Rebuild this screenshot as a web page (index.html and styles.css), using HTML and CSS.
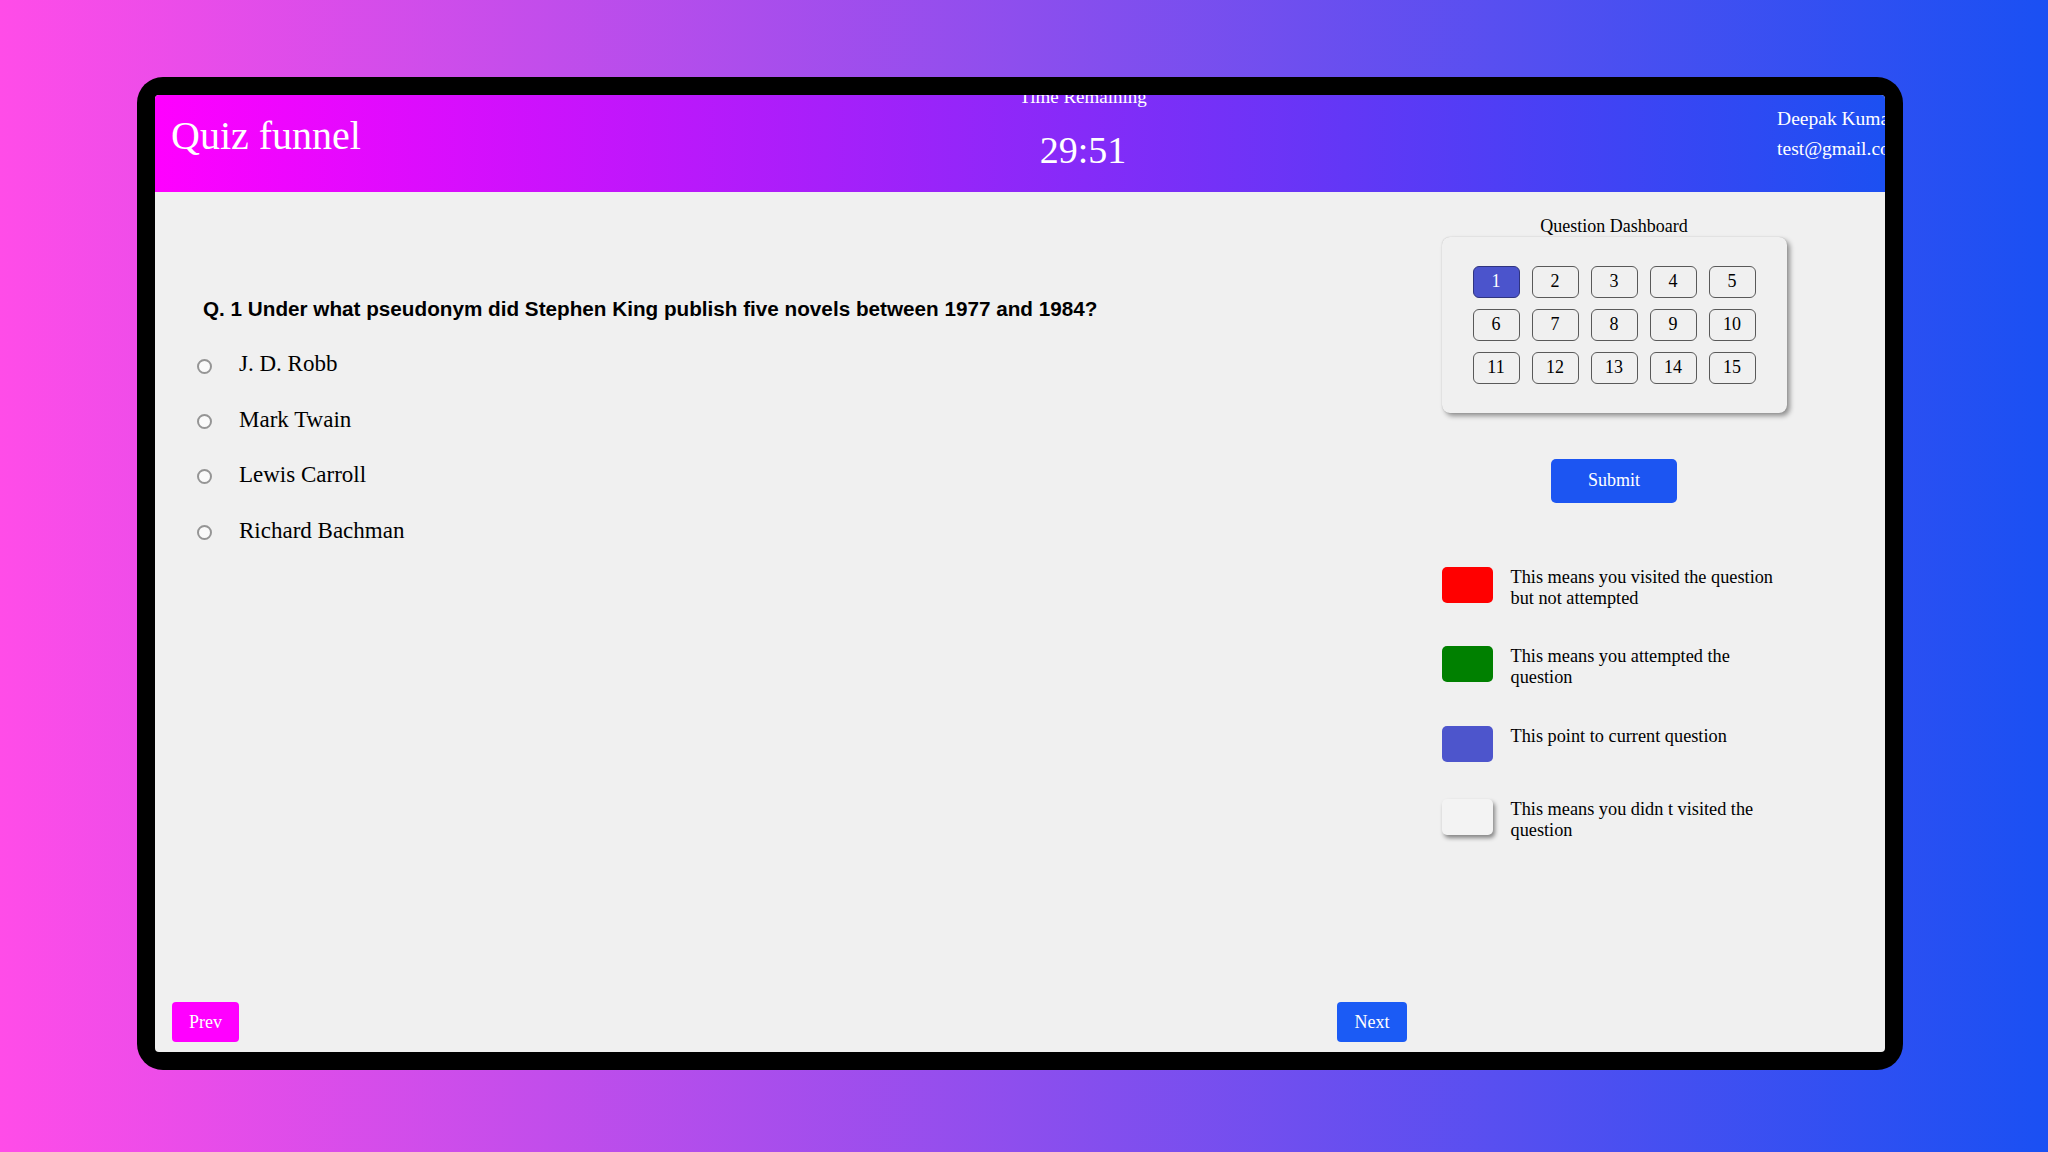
FILE: index.html
```html
<!DOCTYPE html>
<html lang="en">
<head>
  <meta charset="UTF-8">
  <meta name="viewport" content="width=device-width, initial-scale=1.0">
  <title>Quiz funnel</title>
  <link rel="stylesheet" href="styles.css">
</head>
<body>
  <div class="device">
    <div class="app">
      <header class="topbar">
        <h1 class="brand">Quiz funnel</h1>
        <div class="timer">
          <div class="timer-label">Time Remaining</div>
          <div class="timer-value">29:51</div>
        </div>
        <div class="user">
          <div>Deepak Kumar</div>
          <div>test@gmail.com</div>
        </div>
      </header>

      <main class="quiz">
        <section class="question-panel">
          <div class="question">
            <h2 class="question-text">Q. 1 Under what pseudonym did Stephen King publish five novels between 1977 and 1984?</h2>
            <div class="options">
              <label class="option"><input type="radio" name="answer" class="radio"> <span>J. D. Robb</span></label>
              <label class="option"><input type="radio" name="answer" class="radio"> <span>Mark Twain</span></label>
              <label class="option"><input type="radio" name="answer" class="radio"> <span>Lewis Carroll</span></label>
              <label class="option"><input type="radio" name="answer" class="radio"> <span>Richard Bachman</span></label>
            </div>
          </div>
          <div class="nav">
            <button class="btn-prev">Prev</button>
            <button class="btn-next">Next</button>
          </div>
        </section>

        <aside class="side-panel">
          <div class="dashboard-title">Question Dashboard</div>
          <div class="dashboard">
            <button class="q-btn current">1</button>
            <button class="q-btn">2</button>
            <button class="q-btn">3</button>
            <button class="q-btn">4</button>
            <button class="q-btn">5</button>
            <button class="q-btn">6</button>
            <button class="q-btn">7</button>
            <button class="q-btn">8</button>
            <button class="q-btn">9</button>
            <button class="q-btn">10</button>
            <button class="q-btn">11</button>
            <button class="q-btn">12</button>
            <button class="q-btn">13</button>
            <button class="q-btn">14</button>
            <button class="q-btn">15</button>
          </div>
          <button class="btn-submit">Submit</button>

          <div class="legend">
            <div class="legend-item">
              <span class="swatch red"></span>
              <p>This means you visited the question but not attempted</p>
            </div>
            <div class="legend-item">
              <span class="swatch green"></span>
              <p>This means you attempted the question</p>
            </div>
            <div class="legend-item">
              <span class="swatch blue"></span>
              <p>This point to current question</p>
            </div>
            <div class="legend-item">
              <span class="swatch blank"></span>
              <p>This means you didn t visited the question</p>
            </div>
          </div>
        </aside>
      </main>
    </div>
  </div>
</body>
</html>
```

FILE: styles.css
```css
body {
  margin: 0;
  height: 100vh;
  overflow: hidden;
  background: linear-gradient(90deg, #ff4ce8, #1a50f3);
  font-family: "Liberation Serif", "Times New Roman", serif;
}

.device {
  width: 1766px;
  height: 993px;
  box-sizing: border-box;
  margin: 77px 0 0 137px;
  padding: 18px;
  background-color: #000;
  border-radius: 26px;
}

.app {
  height: 100%;
  display: flex;
  flex-direction: column;
  background-color: #f0f0f0;
  border-radius: 4px;
  overflow: hidden;
}

/* header */
.topbar {
  flex-shrink: 0;
  height: 97px;
  display: flex;
  justify-content: space-between;
  align-items: flex-start;
  padding-left: 16px;
  background: linear-gradient(90deg, #ff00ff, #1c50f2);
  color: #fff;
}

.brand {
  margin: 17.5px 0 0;
  font-size: 40px;
  font-weight: normal;
  line-height: 1.15;
  white-space: nowrap;
}

.timer {
  margin-left: 28px;
  display: flex;
  flex-direction: column;
  align-items: center;
  white-space: nowrap;
}

.timer-label {
  margin-top: -9px;
  font-size: 19px;
  line-height: 1.15;
}

.timer-value {
  margin-top: 21px;
  font-size: 38px;
  line-height: 1.15;
}

.user {
  margin: 9px -20px 0 0;
  font-size: 19.5px;
  line-height: 30px;
  white-space: nowrap;
}

/* main area */
.quiz {
  flex: 1;
  display: grid;
  grid-template-columns: 1fr 380px;
  padding-right: 81px;
}

.question-panel {
  display: flex;
  flex-direction: column;
  justify-content: space-between;
}

.question {
  padding-top: 105px;
}

.question-text {
  margin: 0 0 30.5px 48px;
  font-family: "Liberation Sans", Arial, sans-serif;
  font-size: 20.7px;
  font-weight: bold;
  line-height: 1.15;
  color: #000;
}

.options {
  display: flex;
  flex-direction: column;
  gap: 29px;
  padding-left: 42px;
}

.option {
  display: flex;
  align-items: center;
  font-size: 23px;
  line-height: 1.15;
}

.radio {
  appearance: none;
  width: 15px;
  height: 15px;
  margin: 3px 27px 0 0;
  border: 2px solid #959595;
  border-radius: 50%;
  background-color: #fafafa;
  box-sizing: border-box;
}

.nav {
  display: flex;
  justify-content: space-between;
  padding: 0 17px 10px;
}

.nav button,
.btn-submit {
  border: none;
  color: #fff;
  font-family: "Liberation Serif", "Times New Roman", serif;
  font-size: 18px;
  cursor: pointer;
}

.btn-prev {
  width: 67px;
  height: 40px;
  border-radius: 4px;
  background-color: #ff00ff;
}

.btn-next {
  width: 70px;
  height: 40px;
  border-radius: 4px;
  background-color: #1b5bf5;
}

/* side panel */
.side-panel {
  display: flex;
  flex-direction: column;
  align-items: center;
  padding-top: 24px;
}

.dashboard-title {
  font-size: 18px;
  line-height: 1.15;
}

.dashboard {
  display: grid;
  grid-template-columns: repeat(5, 47px);
  column-gap: 12px;
  row-gap: 11px;
  padding: 29px 31px;
  border-radius: 8px;
  background-color: #f0f0f0;
  box-shadow: 3px 3px 5px rgba(0, 0, 0, 0.4), 0 0 1px rgba(0, 0, 0, 0.25);
}

.q-btn {
  height: 32px;
  padding: 0;
  border: 1.5px solid #595959;
  border-radius: 6px;
  background-color: #f0f0f0;
  color: #000;
  font-family: "Liberation Serif", "Times New Roman", serif;
  font-size: 18px;
}

.q-btn.current {
  background-color: #4b54cc;
  border-color: #2f3480;
  color: #fff;
}

.btn-submit {
  width: 126px;
  height: 44px;
  margin-top: 46px;
  border-radius: 5px;
  background-color: #1c55f2;
}

.legend {
  width: 345px;
  margin-top: 64px;
  display: flex;
  flex-direction: column;
  gap: 37.5px;
}

.legend-item {
  display: flex;
  align-items: flex-start;
}

.legend-item p {
  margin: 0 0 0 18px;
  font-size: 18.3px;
  line-height: 1.15;
}

.swatch {
  flex-shrink: 0;
  width: 51px;
  height: 36px;
  border-radius: 5px;
}

.swatch.red {
  background-color: #ff0000;
}

.swatch.green {
  background-color: #008000;
}

.swatch.blue {
  background-color: #4d55cc;
}

.swatch.blank {
  background-color: #f3f3f3;
  box-shadow: 2px 3px 4px rgba(0, 0, 0, 0.45);
}
```
